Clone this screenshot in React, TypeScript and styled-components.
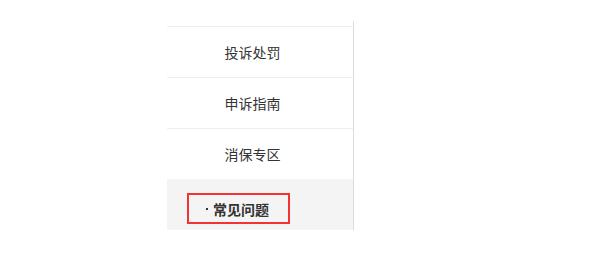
import React from 'react';
import styled, {createGlobalStyle} from 'styled-components';

const GlobalStyle = createGlobalStyle`
  html, body {
    margin: 0;
    padding: 0;
    background: #fff;
  }
  body {
    font-family: "Microsoft YaHei", "Noto Sans CJK SC", sans-serif;
    color: #333;
  }
`;

const Page = styled.div`
  padding: 21px 0 0 167px;
`;

const Sidebar = styled.ul`
  width: 186px;
  margin: 0;
  padding: 0;
  list-style: none;
  border-right: 1px solid #dcdcdc;
`;

const Stub = styled.li`
  height: 5px;
`;

const Item = styled.li<{ $active?: boolean }>`
  display: flex;
  align-items: ${p => (p.$active ? 'flex-start' : 'center')};
  justify-content: ${p => (p.$active ? 'flex-start' : 'center')};
  height: 50px;
  box-sizing: content-box;
  padding: ${p => (p.$active ? '13px 0 0 20px' : '0 15px 0 0')};
  height: ${p => (p.$active ? '37px' : '50px')};
  border-top: 1px solid ${p => (p.$active ? '#f4f4f4' : '#efefef')};
  background: ${p => (p.$active ? '#f4f4f4' : '#fff')};
  font-size: 14px;
  font-weight: ${p => (p.$active ? 700 : 400)};
  cursor: pointer;
`;

const Focus = styled.div`
  display: flex;
  align-items: center;
  height: 27px;
  padding: 0 19px 0 17px;
  border: 2px solid #f33333;
`;

const Dot = styled.span`
  width: 2px;
  height: 2px;
  margin-right: 5px;
  background: #333;
`;

const links = ['投诉处罚', '申诉指南', '消保专区'];

const App: React.FC = () => {
    return (
        <>
            <GlobalStyle/>
            <Page>
                <Sidebar>
                    <Stub/>
                    {links.map(label => (
                        <Item key={label}>{label}</Item>
                    ))}
                    <Item $active>
                        <Focus>
                            <Dot/>
                            常见问题
                        </Focus>
                    </Item>
                </Sidebar>
            </Page>
        </>
    );
};

export default App;
